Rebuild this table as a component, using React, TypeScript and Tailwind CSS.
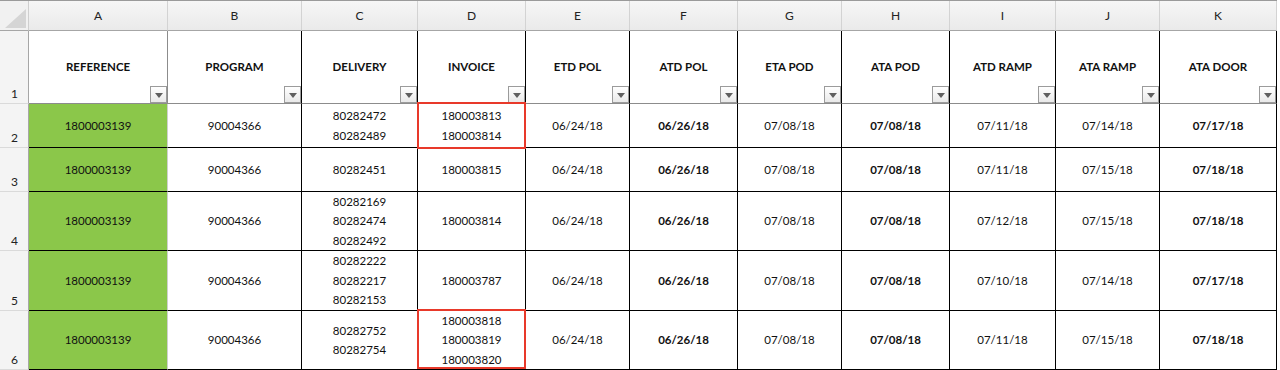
import React from "react";

type Row = {
  n: number;
  delivery: string[];
  invoice: string[];
  dates: string[];
  boxed?: boolean;
};

const letters = ["A", "B", "C", "D", "E", "F", "G", "H", "I", "J", "K"];
const headers = ["REFERENCE", "PROGRAM", "DELIVERY", "INVOICE", "ETD POL", "ATD POL", "ETA POD", "ATA POD", "ATD RAMP", "ATA RAMP", "ATA DOOR"];
// columns shown in bold: ATD POL, ATA POD, ATA DOOR
const boldDate = [false, true, false, true, false, false, true];

const rows: Row[] = [
  { n: 2, delivery: ["80282472", "80282489"], invoice: ["180003813", "180003814"], dates: ["06/24/18", "06/26/18", "07/08/18", "07/08/18", "07/11/18", "07/14/18", "07/17/18"], boxed: true },
  { n: 3, delivery: ["80282451"], invoice: ["180003815"], dates: ["06/24/18", "06/26/18", "07/08/18", "07/08/18", "07/11/18", "07/15/18", "07/18/18"] },
  { n: 4, delivery: ["80282169", "80282474", "80282492"], invoice: ["180003814"], dates: ["06/24/18", "06/26/18", "07/08/18", "07/08/18", "07/12/18", "07/15/18", "07/18/18"] },
  { n: 5, delivery: ["80282222", "80282217", "80282153"], invoice: ["180003787"], dates: ["06/24/18", "06/26/18", "07/08/18", "07/08/18", "07/10/18", "07/14/18", "07/17/18"] },
  { n: 6, delivery: ["80282752", "80282754"], invoice: ["180003818", "180003819", "180003820"], dates: ["06/24/18", "06/26/18", "07/08/18", "07/08/18", "07/11/18", "07/15/18", "07/18/18"], boxed: true },
];

function FilterButton() {
  return (
    <div className="absolute right-0 bottom-0 flex h-[17px] w-[17px] items-center justify-center border border-[#9b9b9b] bg-linear-to-b from-white to-[#e9e9e9]">
      <div className="mt-[1px] h-0 w-0 border-t-[5px] border-r-[4px] border-l-[4px] border-t-[#5f5f5f] border-r-transparent border-l-transparent" />
    </div>
  );
}

function Lines({ items, bold }: { items: string[]; bold?: boolean }) {
  return (
    <>
      {items.map((t) => (
        <div key={t} className={bold ? "font-bold" : ""}>
          {t}
        </div>
      ))}
    </>
  );
}

export default function App() {
  const cell = "relative flex flex-col items-center justify-center border-b border-r text-center";

  return (
    <div className="h-[370px] w-full overflow-hidden bg-white font-['Lato','Liberation_Sans',sans-serif] text-[11.5px] leading-[19.5px] text-[#111]">
      <div className="grid w-[1277px] grid-cols-[29px_139px_134px_116px_108px_104px_108px_104px_108px_106px_104px_117px] grid-rows-[30px_73px_44px_44px_59px_60px_59px] border-t border-[#9a9a9a]">
        {/* column letters */}
        <div className="relative border-b border-r border-b-[#a6a6a6] border-r-[#cfcfcf] bg-[#f1f1f1]">
          <svg className="absolute left-0 top-0" width="28" height="29" viewBox="0 0 28 29">
            <polygon points="26,8 26,27 5,27" fill="#d5d5d5" />
          </svg>
        </div>
        {letters.map((l) => (
          <div key={l} className="flex items-center justify-center border-b border-r border-b-[#a6a6a6] border-r-[#d3d3d3] bg-linear-to-b from-[#f6f6f6] to-[#eaeaea] text-[12px] text-[#222]">
            {l}
          </div>
        ))}

        {/* header row */}
        <div className="flex items-end border-b border-r border-b-[#dadada] border-r-[#a6a6a6] bg-[#f4f4f4] pb-[1px] pl-[11px] text-[12px] leading-[16px] text-[#222]">1</div>
        {headers.map((h, i) => (
          <div key={h} className={`${cell} border-b-[#8c8c8c] font-bold ${i === 0 ? "border-r-[#8c8c8c]" : "border-r-black"}`}>
            {h}
            <FilterButton />
          </div>
        ))}

        {/* data rows */}
        {rows.map((r) => (
          <React.Fragment key={r.n}>
            <div className="flex items-end border-b border-r border-b-[#dadada] border-r-[#a6a6a6] bg-[#f4f4f4] pb-[1px] pl-[11px] text-[12px] leading-[16px] text-[#222]">
              {r.n}
            </div>
            <div className={`${cell} border-b-black border-r-[#cfcfcf] bg-[#8bc74a]`}>1800003139</div>
            <div className={`${cell} border-black`}>90004366</div>
            <div className={`${cell} border-black`}>
              <Lines items={r.delivery} />
            </div>
            <div className={`${cell} border-black`}>
              <Lines items={r.invoice} />
              {r.boxed ? (
                <div className={`pointer-events-none absolute -left-[1px] -right-[1px] -top-[2px] z-10 border-2 border-[#e8392a] ${r.n === 6 ? "bottom-0" : "-bottom-[2px]"}`} />
              ) : null}
            </div>
            {r.dates.map((d, i) => (
              <div key={i} className={`${cell} border-black`}>
                <Lines items={[d]} bold={boldDate[i]} />
              </div>
            ))}
          </React.Fragment>
        ))}
      </div>
    </div>
  );
}
